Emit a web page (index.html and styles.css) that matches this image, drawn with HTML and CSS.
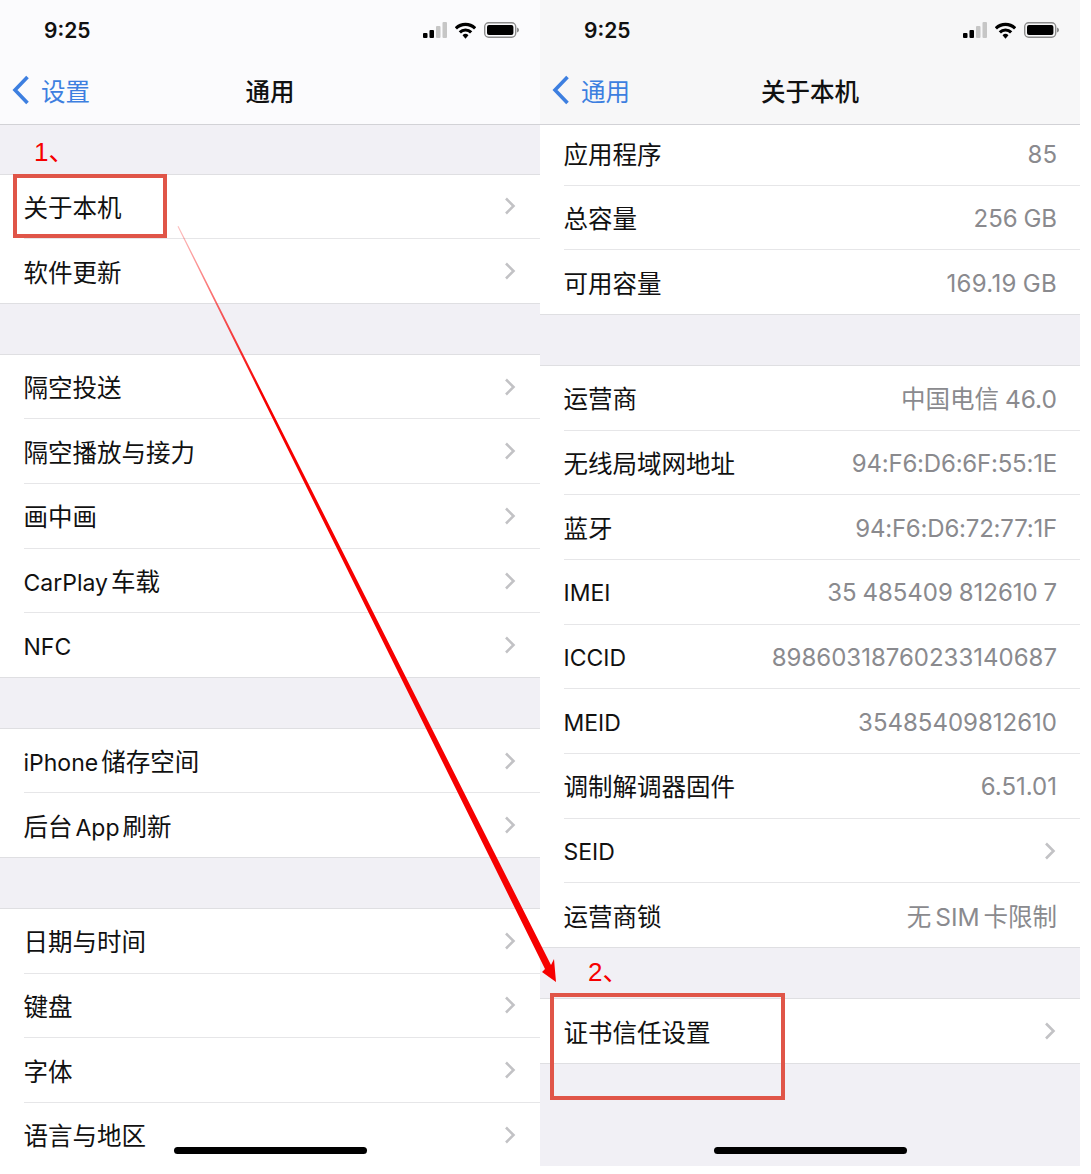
FILE: index.html
```html
<!DOCTYPE html>
<html lang="zh-CN">
<head>
    <meta charset="UTF-8">
    <title>关于本机</title>
    <link rel="stylesheet" href="styles.css">
</head>
<body>
    <svg class="defs" width="0" height="0">
        <symbol id="chev" viewBox="0 0 12 18"><polyline points="2,1.5 9.5,9 2,16.5" fill="none" stroke="#c2c2c5" stroke-width="2.6"/></symbol>
        <symbol id="back" viewBox="0 0 18 30"><polyline points="15.500,2 3,15 15.500,28" fill="none" stroke="#3d7fe0" stroke-width="3.6"/></symbol>
        <symbol id="signal" viewBox="0 0 24 16">
            <rect x="0" y="11" width="4.5" height="5" rx="1"/>
            <rect x="6.5" y="8" width="4.5" height="8" rx="1"/>
            <rect x="13" y="4" width="4.5" height="12" rx="1" fill="#c6c6c6"/>
            <rect x="19.5" y="0" width="4.5" height="16" rx="1" fill="#c6c6c6"/>
        </symbol>
        <symbol id="wifi" viewBox="0 0 20 16">
            <path d="M0.8 6A13 13 0 0 1 19.2 6" fill="none" stroke="#000" stroke-width="3"/>
            <path d="M4.6 9.800A7.600 7.600 0 0 1 15.400 9.800" fill="none" stroke="#000" stroke-width="3"/>
            <path d="M7.2 12.500A4 4 0 0 1 12.800 12.500L10 15.800Z"/>
        </symbol>
        <symbol id="batt" viewBox="0 0 35 16">
            <rect x="0.7" y="0.7" width="31" height="14.6" rx="4" fill="none" stroke="#8c8c8c" stroke-width="1.4"/>
            <rect x="3" y="3" width="26.4" height="10" rx="2"/>
            <path d="M33 5.5C34.4 6 35 7 35 8S34.4 10 33 10.500Z" fill="#8c8c8c"/>
        </symbol>
    </svg>

    <div class="screens">
        <div class="phone phone-left">
            <div class="topbar">
                <div class="statusbar">
                    <span class="time">9:25</span>
                    <div class="status-icons">
                        <svg class="ic-signal"><use href="#signal"/></svg>
                        <svg class="ic-wifi"><use href="#wifi"/></svg>
                        <svg class="ic-batt"><use href="#batt"/></svg>
                    </div>
                </div>
                <div class="navbar">
                    <div class="nav-back"><svg class="ic-back"><use href="#back"/></svg><span>设置</span></div>
                    <div class="nav-title">通用</div>
                </div>
            </div>

            <div class="group group-top">
                <div class="row"><div class="row-inner"><span>关于本机</span><svg class="chev"><use href="#chev"/></svg></div></div>
                <div class="row"><div class="row-inner"><span>软件更新</span><svg class="chev"><use href="#chev"/></svg></div></div>
            </div>
            <div class="group">
                <div class="row"><div class="row-inner"><span>隔空投送</span><svg class="chev"><use href="#chev"/></svg></div></div>
                <div class="row"><div class="row-inner"><span>隔空播放与接力</span><svg class="chev"><use href="#chev"/></svg></div></div>
                <div class="row"><div class="row-inner"><span>画中画</span><svg class="chev"><use href="#chev"/></svg></div></div>
                <div class="row"><div class="row-inner"><span><span class="lat">CarPlay</span>车载</span><svg class="chev"><use href="#chev"/></svg></div></div>
                <div class="row"><div class="row-inner"><span class="en">NFC</span><svg class="chev"><use href="#chev"/></svg></div></div>
            </div>
            <div class="group">
                <div class="row"><div class="row-inner"><span><span class="lat">iPhone</span>储存空间</span><svg class="chev"><use href="#chev"/></svg></div></div>
                <div class="row"><div class="row-inner"><span>后台<span class="lat lat-mid">App</span>刷新</span><svg class="chev"><use href="#chev"/></svg></div></div>
            </div>
            <div class="group">
                <div class="row"><div class="row-inner"><span>日期与时间</span><svg class="chev"><use href="#chev"/></svg></div></div>
                <div class="row"><div class="row-inner"><span>键盘</span><svg class="chev"><use href="#chev"/></svg></div></div>
                <div class="row"><div class="row-inner"><span>字体</span><svg class="chev"><use href="#chev"/></svg></div></div>
                <div class="row"><div class="row-inner"><span>语言与地区</span><svg class="chev"><use href="#chev"/></svg></div></div>
            </div>
            <div class="home-bar"></div>
        </div>

        <div class="phone phone-right">
            <div class="topbar">
                <div class="statusbar">
                    <span class="time">9:25</span>
                    <div class="status-icons">
                        <svg class="ic-signal"><use href="#signal"/></svg>
                        <svg class="ic-wifi"><use href="#wifi"/></svg>
                        <svg class="ic-batt"><use href="#batt"/></svg>
                    </div>
                </div>
                <div class="navbar">
                    <div class="nav-back"><svg class="ic-back"><use href="#back"/></svg><span>通用</span></div>
                    <div class="nav-title">关于本机</div>
                </div>
            </div>

            <div class="group group-clip">
                <div class="row row-short"><div class="row-inner"><span>应用程序</span><span class="val">85</span></div></div>
                <div class="row"><div class="row-inner"><span>总容量</span><span class="val">256 GB</span></div></div>
                <div class="row"><div class="row-inner"><span>可用容量</span><span class="val val-wide">169.19 GB</span></div></div>
            </div>
            <div class="group">
                <div class="row"><div class="row-inner"><span>运营商</span><span class="val val-mix">中国电信 46.0</span></div></div>
                <div class="row"><div class="row-inner"><span>无线局域网地址</span><span class="val val-mac">94:F6:D6:6F:55:1E</span></div></div>
                <div class="row"><div class="row-inner"><span>蓝牙</span><span class="val val-mac">94:F6:D6:72:77:1F</span></div></div>
                <div class="row"><div class="row-inner"><span class="en">IMEI</span><span class="val">35 485409 812610 7</span></div></div>
                <div class="row"><div class="row-inner"><span class="en">ICCID</span><span class="val">89860318760233140687</span></div></div>
                <div class="row"><div class="row-inner"><span class="en">MEID</span><span class="val">35485409812610</span></div></div>
                <div class="row"><div class="row-inner"><span>调制解调器固件</span><span class="val">6.51.01</span></div></div>
                <div class="row"><div class="row-inner"><span class="en">SEID</span><svg class="chev"><use href="#chev"/></svg></div></div>
                <div class="row"><div class="row-inner"><span>运营商锁</span><span class="val val-mix val-sim">无 SIM 卡限制</span></div></div>
            </div>
            <div class="group">
                <div class="row"><div class="row-inner"><span>证书信任设置</span><svg class="chev"><use href="#chev"/></svg></div></div>
            </div>
            <div class="home-bar"></div>
        </div>

        <!-- 标注 -->
        <div class="mark mark-1"></div>
        <div class="mark mark-2"></div>
        <span class="step step-1">1、</span>
        <span class="step step-2">2、</span>
        <svg class="arrow" width="1080" height="1166">
            <defs>
                <linearGradient id="arrow-fade" gradientUnits="userSpaceOnUse" x1="178" y1="227" x2="260" y2="392">
                    <stop offset="0" stop-color="#f60000" stop-opacity="0.25"/>
                    <stop offset="1" stop-color="#f60000"/>
                </linearGradient>
            </defs>
            <polygon points="177.500,226.500 178.500,226 551,965 554,959 556,982 542,972 545,969" fill="url(#arrow-fade)"/>
        </svg>
    </div>
</body>
</html>
```

FILE: styles.css
```css
body {
    margin: 0;
    background-color: white;
    font-family: Inter, "Noto Sans CJK SC", sans-serif;
    font-size: 24.5px;
    color: #111;
}
.defs {
    display: block;
    height: 0;
}
.screens {
    position: relative;
    display: flex;
    width: 1080px;
    height: 1166px;
    overflow: hidden;
}
.phone {
    position: relative;
    width: 540px;
    height: 1166px;
    overflow: hidden;
    background-color: #f1f0f5;
}

/* top bar */
.topbar {
    height: 124px;
    background-color: #fbfbfd;
    border-bottom: 1px solid #d2d2d6;
}
.phone-right .topbar {
    background-color: #f7f7f8;
}
.statusbar {
    display: flex;
    justify-content: space-between;
    align-items: center;
    height: 60px;
    padding: 0 21px 0 44px;
}
.time {
    font-size: 21px;
    font-weight: 600;
}
.status-icons {
    display: flex;
    align-items: center;
    gap: 8px;
}
.ic-signal { width: 24px; height: 16px; }
.ic-wifi { width: 21px; height: 17px; }
.ic-batt { width: 35px; height: 16px; }
.navbar {
    position: relative;
    display: flex;
    align-items: center;
    justify-content: center;
    box-sizing: border-box;
    height: 64px;
    padding-bottom: 4px;
}
.nav-back {
    position: absolute;
    left: 12px;
    top: 0;
    height: 60px;
    display: flex;
    align-items: center;
    gap: 11px;
    color: #3d7fe0;
}
.ic-back { width: 18px; height: 30px; }
.nav-title {
    font-weight: 500;
}

/* list */
.group {
    margin-top: 50px;
    background-color: white;
    border-top: 1px solid #dfdfe2;
}
.phone-left .group {
    margin-top: 49.7px;
}
.phone-left .group-top {
    margin-top: 48.6px;
}
.phone-right .group-clip {
    margin-top: 0;
    border-top: none;
}
.row {
    box-sizing: border-box;
    height: 64.7px;
    padding-left: 23.5px;
}
.phone-right .row-short {
    height: 60.6px;
}
.row-short .row-inner {
    padding-bottom: 3px;
}
.row:last-child {
    border-bottom: 1px solid #dfdfe2;
}
.row-inner {
    box-sizing: border-box;
    display: flex;
    justify-content: space-between;
    align-items: center;
    height: 100%;
    padding-right: 24px;
    border-bottom: 1px solid #e6e6e8;
    white-space: nowrap;
}
.row:last-child .row-inner {
    border-bottom: none;
}
.en {
    padding-top: 3px;
    font-size: 23px;
}
.lat {
    margin-right: 3px;
    font-size: 23px;
}
.lat-mid {
    margin-left: 3px;
}
.val {
    padding-top: 2px;
    margin-right: -1px;
    color: #8a8a8e;
    font-size: 24px;
    word-spacing: -1px;
}
.val-mix {
    padding-top: 0;
    font-size: 24.5px;
}
.val-sim {
    word-spacing: -3px;
}
.val-mac {
    letter-spacing: -0.2px;
}
.val-wide {
    letter-spacing: 0.3px;
}
.chev {
    width: 12px;
    height: 18px;
}
.home-bar {
    position: absolute;
    left: 174px;
    top: 1147px;
    width: 193px;
    height: 7px;
    border-radius: 4px;
    background-color: black;
}

/* annotations */
.mark {
    position: absolute;
    box-sizing: border-box;
    border: 4px solid #e05548;
}
.mark-1 {
    left: 13px;
    top: 174px;
    width: 154px;
    height: 64px;
}
.mark-2 {
    left: 550px;
    top: 993px;
    width: 235px;
    height: 107px;
}
.step {
    position: absolute;
    color: #f60000;
    font-family: "Liberation Sans", "Noto Sans CJK SC", sans-serif;
    font-size: 26px;
    line-height: 30px;
}
.step-1 {
    left: 34px;
    top: 137px;
}
.step-2 {
    left: 588px;
    top: 957px;
}
.arrow {
    position: absolute;
    left: 0;
    top: 0;
}
```
